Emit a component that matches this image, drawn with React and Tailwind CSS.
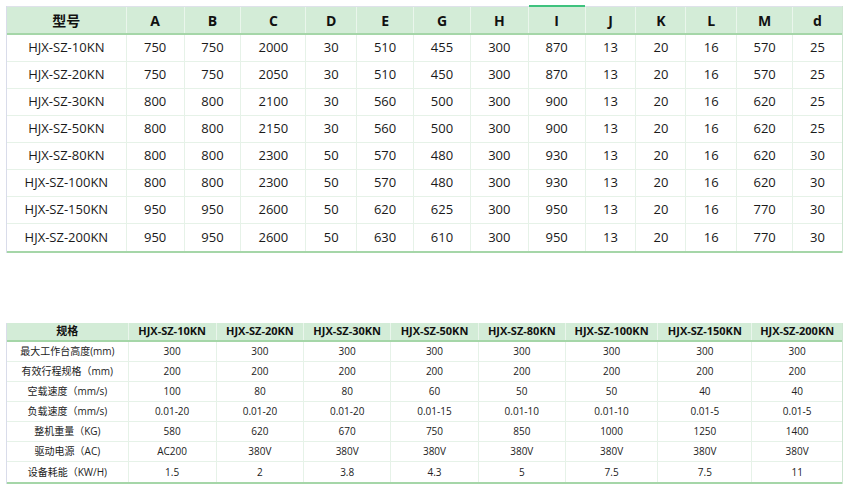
const font = { fontFamily: '"Open Sans", "Noto Sans CJK SC", sans-serif' };

const topCols = [119, 58, 57, 65, 51, 57, 57, 58, 57, 51, 50, 51, 56, 50];
const topHead = ["型号", "A", "B", "C", "D", "E", "G", "H", "I", "J", "K", "L", "M", "d"];
const topRows = [
  ["HJX-SZ-10KN", 750, 750, 2000, 30, 510, 455, 300, 870, 13, 20, 16, 570, 25],
  ["HJX-SZ-20KN", 750, 750, 2050, 30, 510, 450, 300, 870, 13, 20, 16, 570, 25],
  ["HJX-SZ-30KN", 800, 800, 2100, 30, 560, 500, 300, 900, 13, 20, 16, 620, 25],
  ["HJX-SZ-50KN", 800, 800, 2150, 30, 560, 500, 300, 900, 13, 20, 16, 620, 25],
  ["HJX-SZ-80KN", 800, 800, 2300, 50, 570, 480, 300, 930, 13, 20, 16, 620, 30],
  ["HJX-SZ-100KN", 800, 800, 2300, 50, 570, 480, 300, 930, 13, 20, 16, 620, 30],
  ["HJX-SZ-150KN", 950, 950, 2600, 50, 620, 625, 300, 950, 13, 20, 16, 770, 30],
  ["HJX-SZ-200KN", 950, 950, 2600, 50, 630, 610, 300, 950, 13, 20, 16, 770, 30],
];

const specCols = [121, 88, 88, 87, 88, 87, 93, 94, 91];
const specHead = [
  "规格",
  "HJX-SZ-10KN",
  "HJX-SZ-20KN",
  "HJX-SZ-30KN",
  "HJX-SZ-50KN",
  "HJX-SZ-80KN",
  "HJX-SZ-100KN",
  "HJX-SZ-150KN",
  "HJX-SZ-200KN",
];
const specRows = [
  ["最大工作台高度(mm)", 300, 300, 300, 300, 300, 300, 300, 300],
  ["有效行程规格（mm)", 200, 200, 200, 200, 200, 200, 200, 200],
  ["空载速度（mm/s)", 100, 80, 80, 60, 50, 50, 40, 40],
  ["负载速度（mm/s)", "0.01-20", "0.01-20", "0.01-20", "0.01-15", "0.01-10", "0.01-10", "0.01-5", "0.01-5"],
  ["整机重量（KG)", 580, 620, 670, 750, 850, 1000, 1250, 1400],
  ["驱动电源（AC)", "AC200", "380V", "380V", "380V", "380V", "380V", "380V", "380V"],
  ["设备耗能（KW/H)", 1.5, 2, 3.8, 4.3, 5, 7.5, 7.5, 11],
];

function DimTable() {
  return (
    <div className="w-[837px] border-l border-[#d9dcea] border-r border-r-[#cfe6d2]">
      <div className="flex h-[29px] bg-[#d3ecd7] border-t border-[#dfe2ea] border-b-2 border-b-[#a5d6a8]">
        {topHead.map((h, i) => (
          <div
            key={h}
            style={{ width: topCols[i] }}
            className={`relative flex items-center justify-center text-[14px] font-bold text-[#111] ${
              i > 0 ? "border-l border-[#eaf6ec]" : ""
            }`}
          >
            {h === "I" && <span className="absolute left-0 right-0 top-[-2px] h-[2px] bg-[#3fc27e]" />}
            {h}
          </div>
        ))}
      </div>
      {topRows.map((r, ri) => (
        <div
          key={ri}
          className={`flex h-[27px] ${ri < topRows.length - 1 ? "border-b border-[#e6f2e8]" : ""}`}
        >
          {r.map((c, i) => (
            <div
              key={i}
              style={{ width: topCols[i] }}
              className={`flex items-center justify-center text-[13px] text-[#1a1a1a] ${
                i > 0 ? "border-l border-[#e6f2e8]" : ""
              }`}
            >
              {c}
            </div>
          ))}
        </div>
      ))}
      <div className="h-[2px] bg-[#a5d6a8]" />
    </div>
  );
}

function SpecTable() {
  return (
    <div className="w-[837px] border-l border-[#d9dcea] border-r border-r-[#cfe6d2]">
      <div className="flex h-[19px] bg-[#d3ecd7] border-b-2 border-[#a5d6a8]">
        {specHead.map((h, i) => (
          <div
            key={h}
            style={{ width: specCols[i] }}
            className={`flex items-center justify-center text-[11px] font-bold text-[#111] ${
              i > 0 ? "border-l border-[#eaf6ec]" : ""
            }`}
          >
            {h}
          </div>
        ))}
      </div>
      {specRows.map((r, ri) => (
        <div
          key={ri}
          className={`flex h-[20px] ${ri < specRows.length - 1 ? "border-b border-[#e6f2e8]" : ""}`}
        >
          {r.map((c, i) => (
            <div
              key={i}
              style={{ width: specCols[i] }}
              className={`flex items-center justify-center text-[10px] text-[#222] ${
                i > 0 ? "border-l border-[#e6f2e8]" : ""
              }`}
            >
              {c}
            </div>
          ))}
        </div>
      ))}
      <div className="h-[2px] bg-[#a5d6a8]" />
    </div>
  );
}

export default function App() {
  return (
    <div style={font} className="w-[850px] h-[491px] bg-white pl-[6px] pt-[6px] flex flex-col gap-[70px]">
      <DimTable />
      <SpecTable />
    </div>
  );
}
